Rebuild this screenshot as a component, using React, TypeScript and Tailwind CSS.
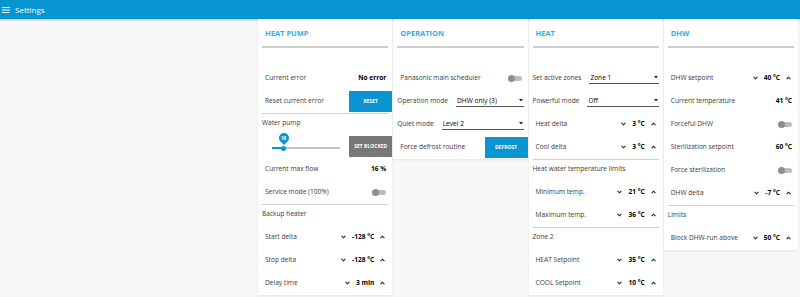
import React from "react";

const Chevron = ({ up }: { up?: boolean }) => (
  <svg width="5" height="4" viewBox="0 0 5 4" className="shrink-0">
    <polyline
      points={up ? "0.6,3.2 2.5,1.2 4.4,3.2" : "0.6,0.8 2.5,2.8 4.4,0.8"}
      fill="none"
      stroke="#222"
      strokeWidth="1.1"
    />
  </svg>
);

function Card({ title, children }: { title: string; children: React.ReactNode }) {
  return (
    <div className="bg-white shadow-[0_1px_2px_rgba(0,0,0,0.08)]">
      <div className="pl-[7px] pt-[9px] h-[19px] leading-[10px] text-[7.5px] font-bold text-[#2eaff0]">
        {title}
      </div>
      <div className="mx-[4px] mt-[8px] h-[2px] bg-[#cdcdcd]" />
      <div className="h-[18.5px]" />
      {children}
    </div>
  );
}

function Row({ label, children, pl = "pl-[7px]" }: { label: string; children?: React.ReactNode; pl?: string }) {
  return (
    <div className={`h-[23px] flex items-center justify-between ${pl} pr-[6px]`}>
      <span className="text-[#3a3a3a] whitespace-nowrap">{label}</span>
      {children}
    </div>
  );
}

const Value = ({ children }: { children: React.ReactNode }) => (
  <span className="font-bold text-black whitespace-nowrap">{children}</span>
);

const Spinner = ({ value }: { value: string }) => (
  <div className="flex items-center gap-[6px] pr-[1px]">
    <Chevron />
    <Value>{value}</Value>
    <Chevron up />
  </div>
);

const Toggle = () => (
  <div className="relative w-[14px] h-[7px] flex items-center">
    <div className="w-[14px] h-[5px] rounded-full bg-[#bdbdbd]" />
    <div className="absolute left-0 top-0 w-[7px] h-[7px] rounded-full bg-[#8f8f8f]" />
  </div>
);

const Select = ({ value }: { value: string }) => (
  <div className="flex-1 ml-[8px] -mr-[2px] h-[12px] flex items-center justify-between border-b border-[#555] pl-[1px] pr-[1px]">
    <span className="text-black whitespace-nowrap">{value}</span>
    <svg width="4" height="3" viewBox="0 0 4 3">
      <polygon points="0,0 4,0 2,2.6" fill="#222" />
    </svg>
  </div>
);

const Btn = ({ label, grey }: { label: string; grey?: boolean }) => (
  <button
    className={`-mr-[6px] h-[21px] w-[43px] flex items-center justify-center whitespace-nowrap text-[5px] font-bold text-white ${
      grey ? "bg-[#777]" : "bg-[#0a95d2]"
    }`}
  >
    {label}
  </button>
);

const Section = ({ label }: { label: string }) => (
  <div className="h-[22px]">
    <div className="mx-[4px] h-[1px] bg-[#d0d0d0]" />
    <div className="pl-[4px] pt-[4px] leading-[10px] text-[#3a3a3a]">{label}</div>
  </div>
);

function WaterPump() {
  return (
    <div className="h-[23px] flex items-center justify-between pl-[14px] pr-[6px]">
      <div className="relative w-[68px] h-[23px]">
        <div className="absolute left-0 right-0 top-[12.5px] h-[1.5px] bg-[#c4c4c4]" />
        <div className="absolute left-0 w-[12px] top-[12.5px] h-[1.5px] bg-[#0a95d2]" />
        <div className="absolute left-[9px] top-[11px] w-[5px] h-[5px] rounded-full bg-[#0a95d2]" />
        <div className="absolute left-[6.5px] top-[-2px] w-[10px] h-[10px] rounded-[50%_50%_50%_0] -rotate-45 bg-[#0a95d2]" />
        <div className="absolute left-[6.5px] top-[-2px] w-[10px] h-[10px] flex items-center justify-center text-[4.5px] font-bold text-white">
          16
        </div>
      </div>
      <Btn label="SET BLOCKED" grey />
    </div>
  );
}

export default function App() {
  return (
    <div className="min-h-screen bg-[#f7f7f7] font-['Open_Sans',sans-serif] text-[6.6px] leading-[10px]">
      <div className="h-[19px] bg-[#0795d1] flex items-center pl-[2px] text-white shadow-[0_1px_2px_rgba(0,0,0,0.25)]">
        <svg width="8" height="6" viewBox="0 0 8 6">
          <rect x="0" y="0" width="8" height="1" fill="#fff" />
          <rect x="0" y="2.5" width="8" height="1" fill="#fff" />
          <rect x="0" y="5" width="8" height="1" fill="#fff" />
        </svg>
        <span className="ml-[5px] text-[8px]">Settings</span>
      </div>

      <div className="grid grid-cols-4 gap-[1px] pl-[258px] pr-[2px] items-start">
        <Card title="HEAT PUMP">
          <Row label="Current error">
            <Value>No error</Value>
          </Row>
          <Row label="Reset current error">
            <Btn label="RESET" />
          </Row>
          <Section label="Water pump" />
          <WaterPump />
          <Row label="Current max flow">
            <Value>16 %</Value>
          </Row>
          <Row label="Service mode (100%)">
            <Toggle />
          </Row>
          <Section label="Backup heater" />
          <Row label="Start delta">
            <Spinner value="-128 °C" />
          </Row>
          <Row label="Stop delta">
            <Spinner value="-128 °C" />
          </Row>
          <Row label="Delay time">
            <Spinner value="3 min" />
          </Row>
        </Card>

        <Card title="OPERATION">
          <Row label="Panasonic main scheduler">
            <Toggle />
          </Row>
          <Row label="Operation mode" pl="pl-[4px]">
            <Select value="DHW only (3)" />
          </Row>
          <Row label="Quiet mode" pl="pl-[4px]">
            <Select value="Level 2" />
          </Row>
          <Row label="Force defrost routine">
            <Btn label="DEFROST" />
          </Row>
        </Card>

        <Card title="HEAT">
          <Row label="Set active zones" pl="pl-[4px]">
            <Select value="Zone 1" />
          </Row>
          <Row label="Powerful mode" pl="pl-[4px]">
            <Select value="Off" />
          </Row>
          <Row label="Heat delta">
            <Spinner value="3 °C" />
          </Row>
          <Row label="Cool delta">
            <Spinner value="3 °C" />
          </Row>
          <Section label="Heat water temperature limits" />
          <Row label="Minimum temp.">
            <Spinner value="21 °C" />
          </Row>
          <Row label="Maximum temp.">
            <Spinner value="36 °C" />
          </Row>
          <Section label="Zone 2" />
          <Row label="HEAT Setpoint">
            <Spinner value="35 °C" />
          </Row>
          <Row label="COOL Setpoint">
            <Spinner value="10 °C" />
          </Row>
        </Card>

        <Card title="DHW">
          <Row label="DHW setpoint">
            <Spinner value="40 °C" />
          </Row>
          <Row label="Current temperature">
            <Value>41 °C</Value>
          </Row>
          <Row label="Forceful DHW">
            <Toggle />
          </Row>
          <Row label="Sterilization setpoint">
            <Value>60 °C</Value>
          </Row>
          <Row label="Force sterilization">
            <Toggle />
          </Row>
          <Row label="DHW delta">
            <Spinner value="-7 °C" />
          </Row>
          <Section label="Limits" />
          <Row label="Block DHW-run above">
            <Spinner value="50 °C" />
          </Row>
        </Card>
      </div>
    </div>
  );
}
